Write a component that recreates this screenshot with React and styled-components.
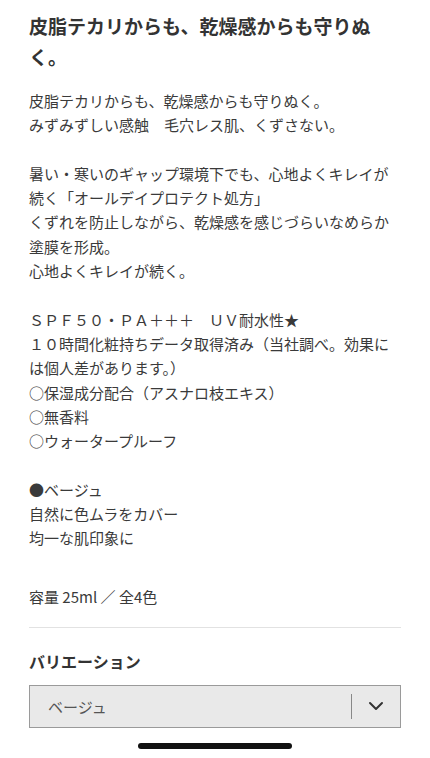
import React from 'react'
import styled, { createGlobalStyle } from 'styled-components'

const GlobalStyle = createGlobalStyle`
    html, body {
        margin: 0;
        padding: 0;
        background: #fff;
    }
    body {
        font-family: "Noto Sans CJK JP", "Noto Sans", sans-serif;
        color: #333;
        -webkit-font-smoothing: antialiased;
    }
`

const lines = [
    '皮脂テカリからも、乾燥感からも守りぬく。',
    'みずみずしい感触　毛穴レス肌、くずさない。',
    '',
    '暑い・寒いのギャップ環境下でも、心地よくキレイが続く「オールデイプロテクト処方」',
    'くずれを防止しながら、乾燥感を感じづらいなめらか塗膜を形成。',
    '心地よくキレイが続く。',
    '',
    'ＳＰＦ５０・ＰＡ＋＋＋　ＵＶ耐水性★',
    '１０時間化粧持ちデータ取得済み（当社調べ。効果には個人差があります。）',
    '○保湿成分配合（アスナロ枝エキス）',
    '○無香料',
    '○ウォータープルーフ',
    '',
    '●ベージュ',
    '自然に色ムラをカバー',
    '均一な肌印象に',
    '',
]

function App() {
    return (
        <Page>
            <GlobalStyle />
            <Title>皮脂テカリからも、乾燥感からも守りぬく。</Title>
            <Description>
                {lines.map((l, i) => (
                    <Line key={i}>{l || '\u00a0'}</Line>
                ))}
            </Description>
            <Volume>容量 25ml ／ 全4色</Volume>
            <Divider />
            <SectionLabel>バリエーション</SectionLabel>
            <Select>
                <SelectValue>ベージュ</SelectValue>
                <SelectArrow>
                    <svg width="16" height="10" viewBox="0 0 16 10" fill="none">
                        <path d="M2 2l6 6 6-6" stroke="#333" strokeWidth="2" strokeLinecap="round" strokeLinejoin="round" />
                    </svg>
                </SelectArrow>
            </Select>
            <HomeIndicator />
        </Page>
    )
}

export default App

const Page = styled.div`
    padding: 10px 29px 40px;
    min-height: 758px;
    box-sizing: border-box;
    line-break: strict;
`

const Title = styled.h1`
    margin: 0;
    font-size: 19px;
    line-height: 31px;
    font-weight: 700;
    color: #333;
`

const Description = styled.div`
    margin-top: 17px;
    font-size: 15px;
    line-height: 24.3px;
    color: #3a3a3a;
`

const Line = styled.p`
    margin: 0;
`

const Volume = styled.p`
    margin: 10px 0 0;
    font-size: 15px;
    line-height: 24px;
    color: #3a3a3a;
`

const Divider = styled.hr`
    margin: 18px 0 0;
    border: none;
    border-top: 1px solid #e2e2e2;
`

const SectionLabel = styled.h2`
    margin: 21px 0 0;
    font-size: 16px;
    line-height: 24px;
    font-weight: 700;
    color: #333;
`

const Select = styled.div`
    margin-top: 12px;
    height: 43px;
    box-sizing: border-box;
    border: 1px solid #9a9a9a;
    background: #e9e9e9;
    display: flex;
    align-items: center;
`

const SelectValue = styled.span`
    flex: 1;
    padding-left: 18px;
    font-size: 15px;
    color: #555;
`

const SelectArrow = styled.span`
    width: 48px;
    height: 25px;
    border-left: 1px solid #888;
    display: flex;
    align-items: center;
    justify-content: center;
`

const HomeIndicator = styled.div`
    position: fixed;
    left: 138px;
    top: 743px;
    width: 154px;
    height: 6px;
    border-radius: 3px;
    background: #111;
`
